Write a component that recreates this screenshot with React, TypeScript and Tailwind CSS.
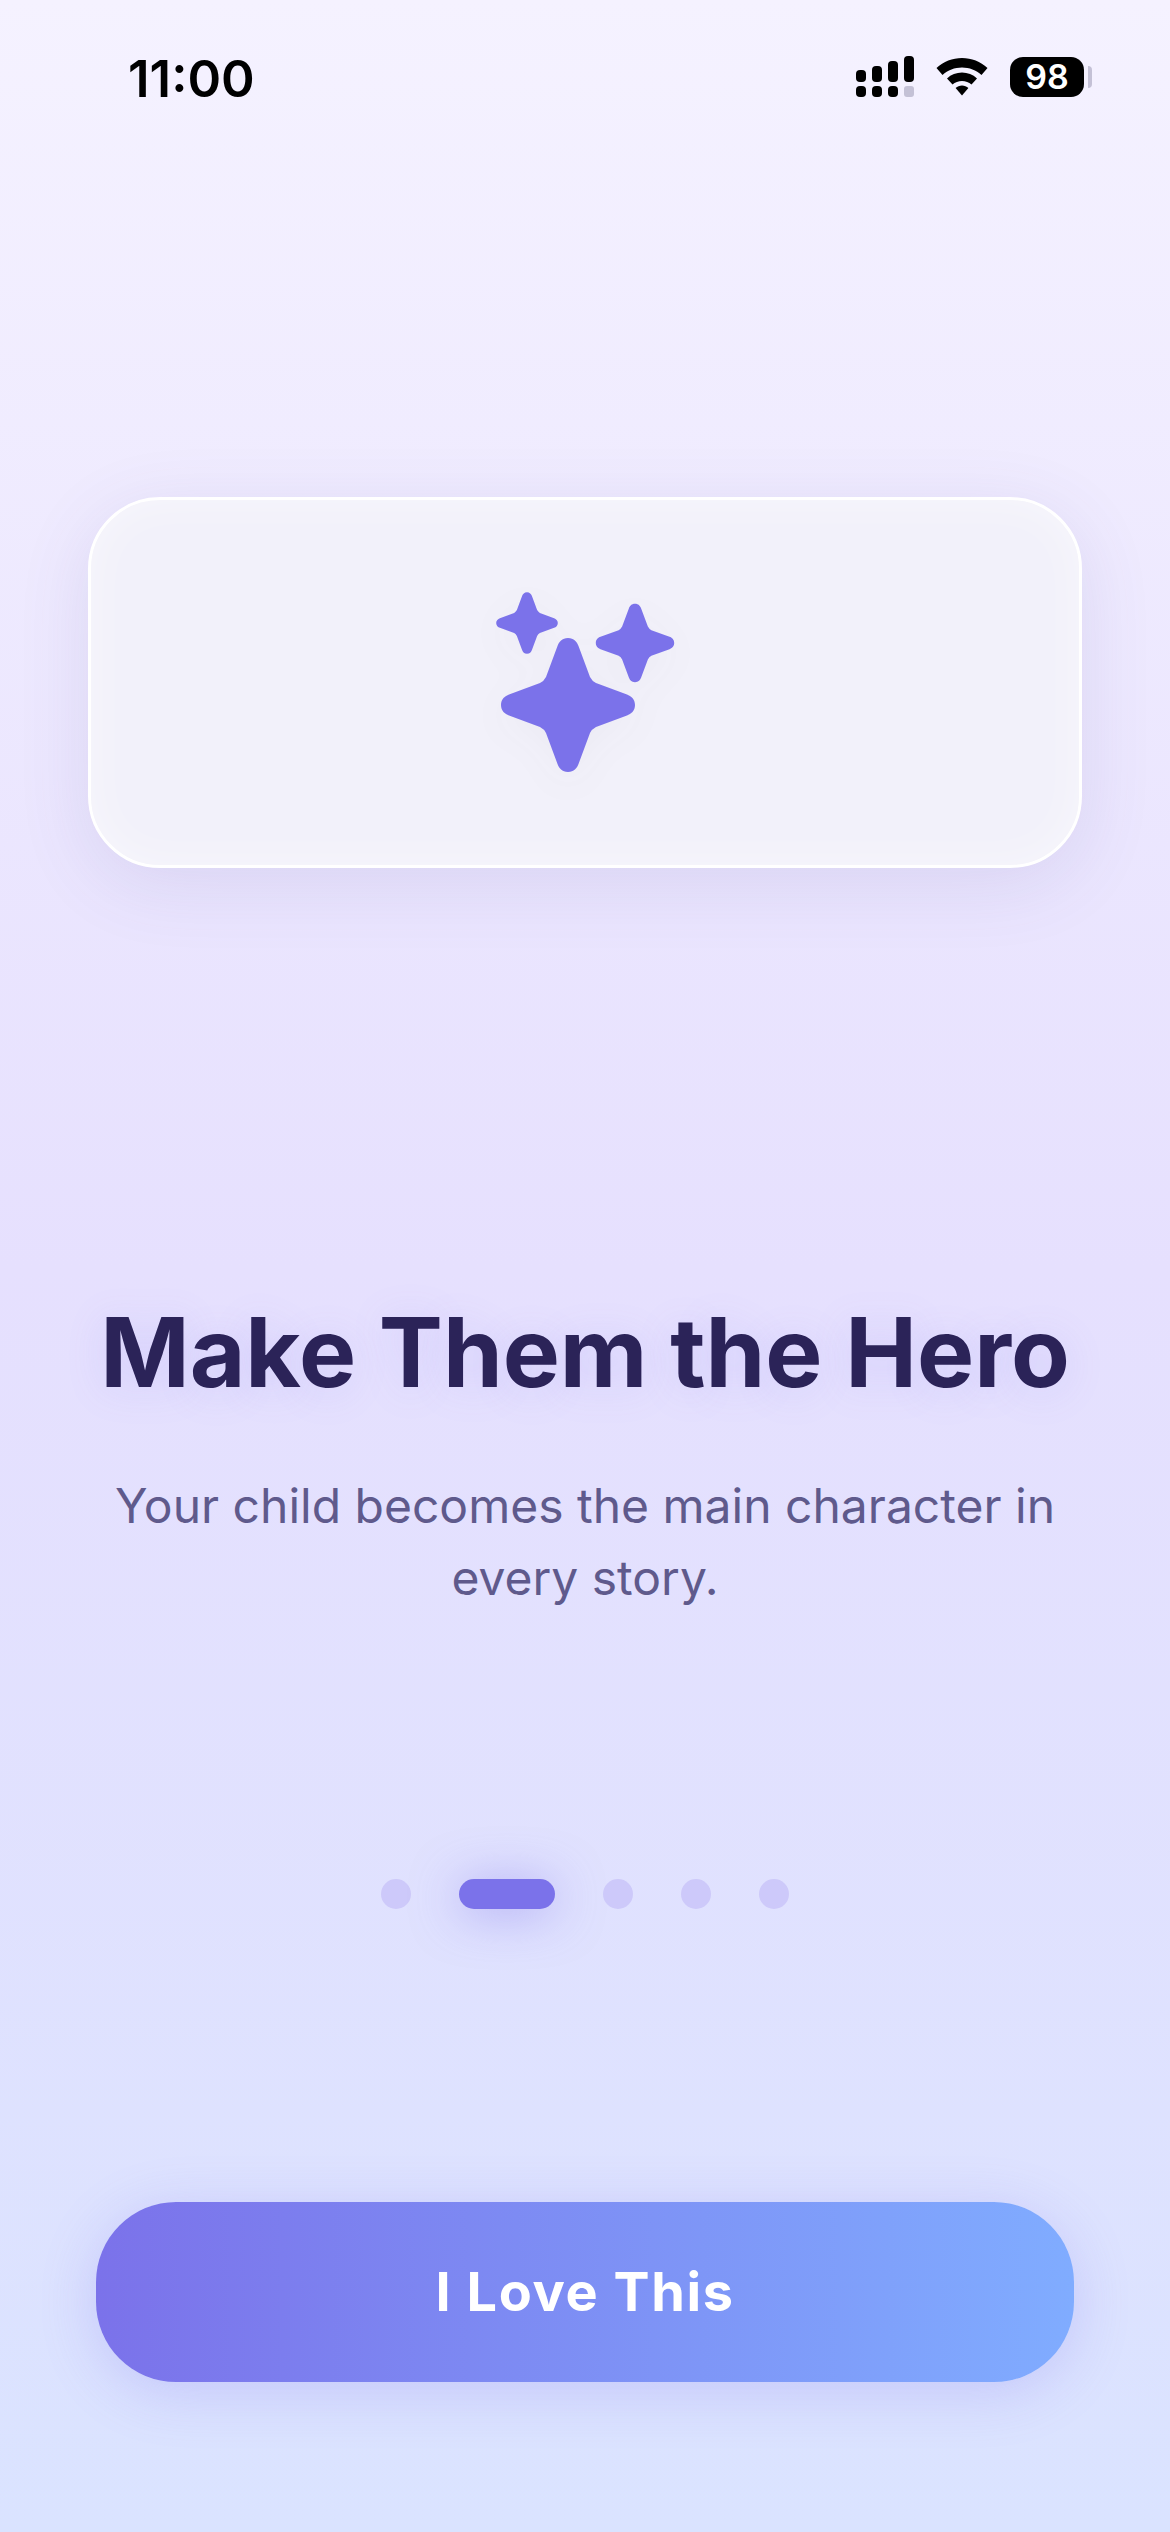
import React from 'react';

const starPath =
  'M0 -67 C6 -67 9 -63 10.5 -59 L22 -28 Q24 -24 28 -22 L59 -10.5 C63 -9 67 -6 67 0 C67 6 63 9 59 10.5 L28 22 Q24 24 22 28 L10.5 59 C9 63 6 67 0 67 C-6 67 -9 63 -10.5 59 L-22 28 Q-24 24 -28 22 L-59 10.5 C-63 9 -67 6 -67 0 C-67 -6 -63 -9 -59 -10.5 L-28 -22 Q-24 -24 -22 -28 L-10.5 -59 C-9 -63 -6 -67 0 -67Z';

function SignalIcon() {
  return (
    <svg width="58" height="42" viewBox="0 0 58 42" className="block">
      <rect x="0" y="14" width="10" height="12" rx="4" fill="#000" />
      <rect x="16" y="10" width="10" height="16" rx="4" fill="#000" />
      <rect x="32" y="5" width="10" height="21" rx="4" fill="#000" />
      <rect x="48" y="0" width="10" height="26" rx="4" fill="#000" />
      <rect x="0" y="30" width="10" height="11" rx="4" fill="#000" />
      <rect x="16" y="30" width="10" height="11" rx="4" fill="#000" />
      <rect x="32" y="30" width="10" height="11" rx="4" fill="#000" />
      <rect x="48" y="30" width="10" height="11" rx="3" fill="#c4c1d6" />
    </svg>
  );
}

function WifiIcon() {
  return (
    <svg width="52" height="38" viewBox="0 0 52 38" className="block">
      <path d="M26 0 C35.5 0 44.5 3.6 51.5 10 L45.5 17 C40.2 12.1 33.3 9.4 26 9.4 C18.7 9.4 11.8 12.1 6.5 17 L0.5 10 C7.5 3.6 16.5 0 26 0Z" fill="#000" />
      <path d="M26 14.6 C31.6 14.6 36.9 16.7 41 20.4 L35.5 26.6 C32.9 24.3 29.5 23 26 23 C22.5 23 19.1 24.3 16.5 26.6 L11 20.4 C15.1 16.7 20.4 14.6 26 14.6Z" fill="#000" />
      <path d="M26 27.6 C28.4 27.6 30.7 28.5 32.4 30.1 L26 37.5 L19.6 30.1 C21.3 28.5 23.6 27.6 26 27.6Z" fill="#000" />
    </svg>
  );
}

function StatusBar() {
  return (
    <div className="flex h-10 items-center justify-between pl-[128px] pr-[78px]">
      <span className="pt-[3px] text-[51px] leading-none font-semibold text-black">11:00</span>
      <div className="flex items-center">
        <SignalIcon />
        <div className="ml-[22px]">
          <WifiIcon />
        </div>
        <div className="ml-[22px] flex h-10 w-[74px] items-center justify-center rounded-[13px] bg-black text-[34px] leading-none font-semibold text-white">
          98
        </div>
        <div className="ml-1 h-[22px] w-1 rounded-r-full bg-[#c4c1d6]" />
      </div>
    </div>
  );
}

function HeroCard() {
  return (
    <div className="mx-[88px] mt-[400px] flex h-[371px] items-center justify-center rounded-[72px] border-[3px] border-white bg-[#f2f1fa] shadow-[0_16px_72px_rgba(90,80,160,0.12),inset_0_0_48px_rgba(255,255,255,0.45)]">
      <svg
        width="190"
        height="186"
        viewBox="0 0 190 186"
        className="drop-shadow-[0_10px_18px_rgba(60,60,60,0.03)]"
      >
        <path transform="translate(78 115)" d={starPath} fill="#7b72ea" />
        <path transform="translate(37 33) scale(0.46)" d={starPath} fill="#7b72ea" />
        <path transform="translate(145 53) scale(0.585)" d={starPath} fill="#7b72ea" />
      </svg>
    </div>
  );
}

function Dots() {
  return (
    <div className="mt-[265px] flex items-center justify-center gap-12">
      <span className="h-[30px] w-[30px] rounded-full bg-[#cdc9fa]" />
      <span className="h-[30px] w-24 rounded-full bg-[#7b72ea] shadow-[0_4px_48px_rgba(123,114,234,0.5)]" />
      <span className="h-[30px] w-[30px] rounded-full bg-[#cdc9fa]" />
      <span className="h-[30px] w-[30px] rounded-full bg-[#cdc9fa]" />
      <span className="h-[30px] w-[30px] rounded-full bg-[#cdc9fa]" />
    </div>
  );
}

export default function App() {
  return (
    <div className="h-[2532px] w-full overflow-hidden bg-[linear-gradient(180deg,#f5f2ff_0%,#e6e0fe_50%,#dae3ff_100%)] pt-[57px] font-['Inter',sans-serif]">
      <StatusBar />
      <HeroCard />
      <h1 className="mt-[426px] text-center text-[96px] leading-[116px] font-bold text-[#2b2358] [text-shadow:0_4px_40px_rgba(123,114,234,0.16)]">
        Make Them the Hero
      </h1>
      <p className="mx-auto mt-[60px] w-[994px] text-center text-[48px] leading-[72px] text-[#5f5a8c]">
        Your child becomes the main character in every story.
      </p>
      <Dots />
      <div className="mx-24 mt-[293px] flex h-[180px] items-center justify-center rounded-[80px] bg-[linear-gradient(90deg,#7b72ea,#80acff)] shadow-[0_10px_56px_rgba(123,114,234,0.24)]">
        <span className="text-[54px] leading-none font-bold tracking-[1.6px] text-white">I Love This</span>
      </div>
    </div>
  );
}
